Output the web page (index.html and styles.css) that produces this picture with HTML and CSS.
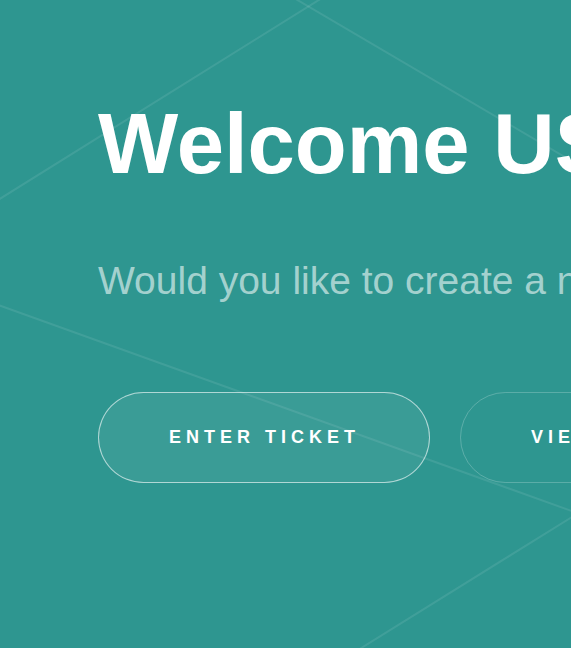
FILE: index.html
```html
<!DOCTYPE html>
<html lang="en">
<head>
<meta charset="utf-8">
<title>Welcome</title>
<link rel="stylesheet" href="styles.css">
</head>
<body>
<main class="hero">
  <svg class="bg-lines" viewBox="0 0 571 648" preserveAspectRatio="none" aria-hidden="true">
    <line x1="-10" y1="205" x2="322" y2="-2"/>
    <line x1="294" y1="-2" x2="580" y2="166"/>
    <line x1="-10" y1="302" x2="580" y2="514"/>
    <line x1="580" y1="512" x2="350" y2="655"/>
  </svg>
  <div class="content">
    <h1 class="title">Welcome USER</h1>
    <p class="subtitle">Would you like to create a new ticket?</p>
    <div class="actions">
      <a class="btn btn-primary" href="#">ENTER TICKET</a>
      <a class="btn btn-ghost" href="#">VIEW TICKETS</a>
    </div>
  </div>
</main>
</body>
</html>
```
FILE: styles.css
```css
html, body {
  margin: 0;
  padding: 0;
}
body {
  background: #2e9690;
  font-family: "Liberation Sans", Arial, sans-serif;
  overflow: hidden;
  height: 648px;
}
.hero {
  position: relative;
  height: 648px;
  overflow: hidden;
}
.bg-lines {
  position: absolute;
  left: 0;
  top: 0;
  width: 100%;
  height: 100%;
  z-index: 0;
}
.bg-lines line {
  stroke: rgba(255, 255, 255, 0.09);
  stroke-width: 2;
}
.content {
  position: relative;
  z-index: 1;
  padding: 101px 0 0 98px;
  white-space: nowrap;
}
.title {
  margin: 0;
  font-size: 85px;
  line-height: 85px;
  font-weight: 700;
  color: #ffffff;
}
.subtitle {
  margin: 75px 0 0;
  font-size: 39px;
  line-height: 39px;
  font-weight: 400;
  color: rgba(255, 255, 255, 0.58);
}
.actions {
  display: flex;
  gap: 30px;
  margin-top: 92px;
}
.btn {
  display: flex;
  align-items: center;
  justify-content: center;
  flex: none;
  box-sizing: border-box;
  height: 91px;
  padding: 0 69px 0 70px;
  border-radius: 46px;
  font-size: 18px;
  font-weight: 700;
  letter-spacing: 5px;
  color: #ffffff;
  text-decoration: none;
}
.btn-primary {
  background: rgba(255, 255, 255, 0.06);
  border: 1px solid rgba(255, 255, 255, 0.6);
}
.btn-ghost {
  background: transparent;
  border: 1px solid rgba(255, 255, 255, 0.22);
}
```
